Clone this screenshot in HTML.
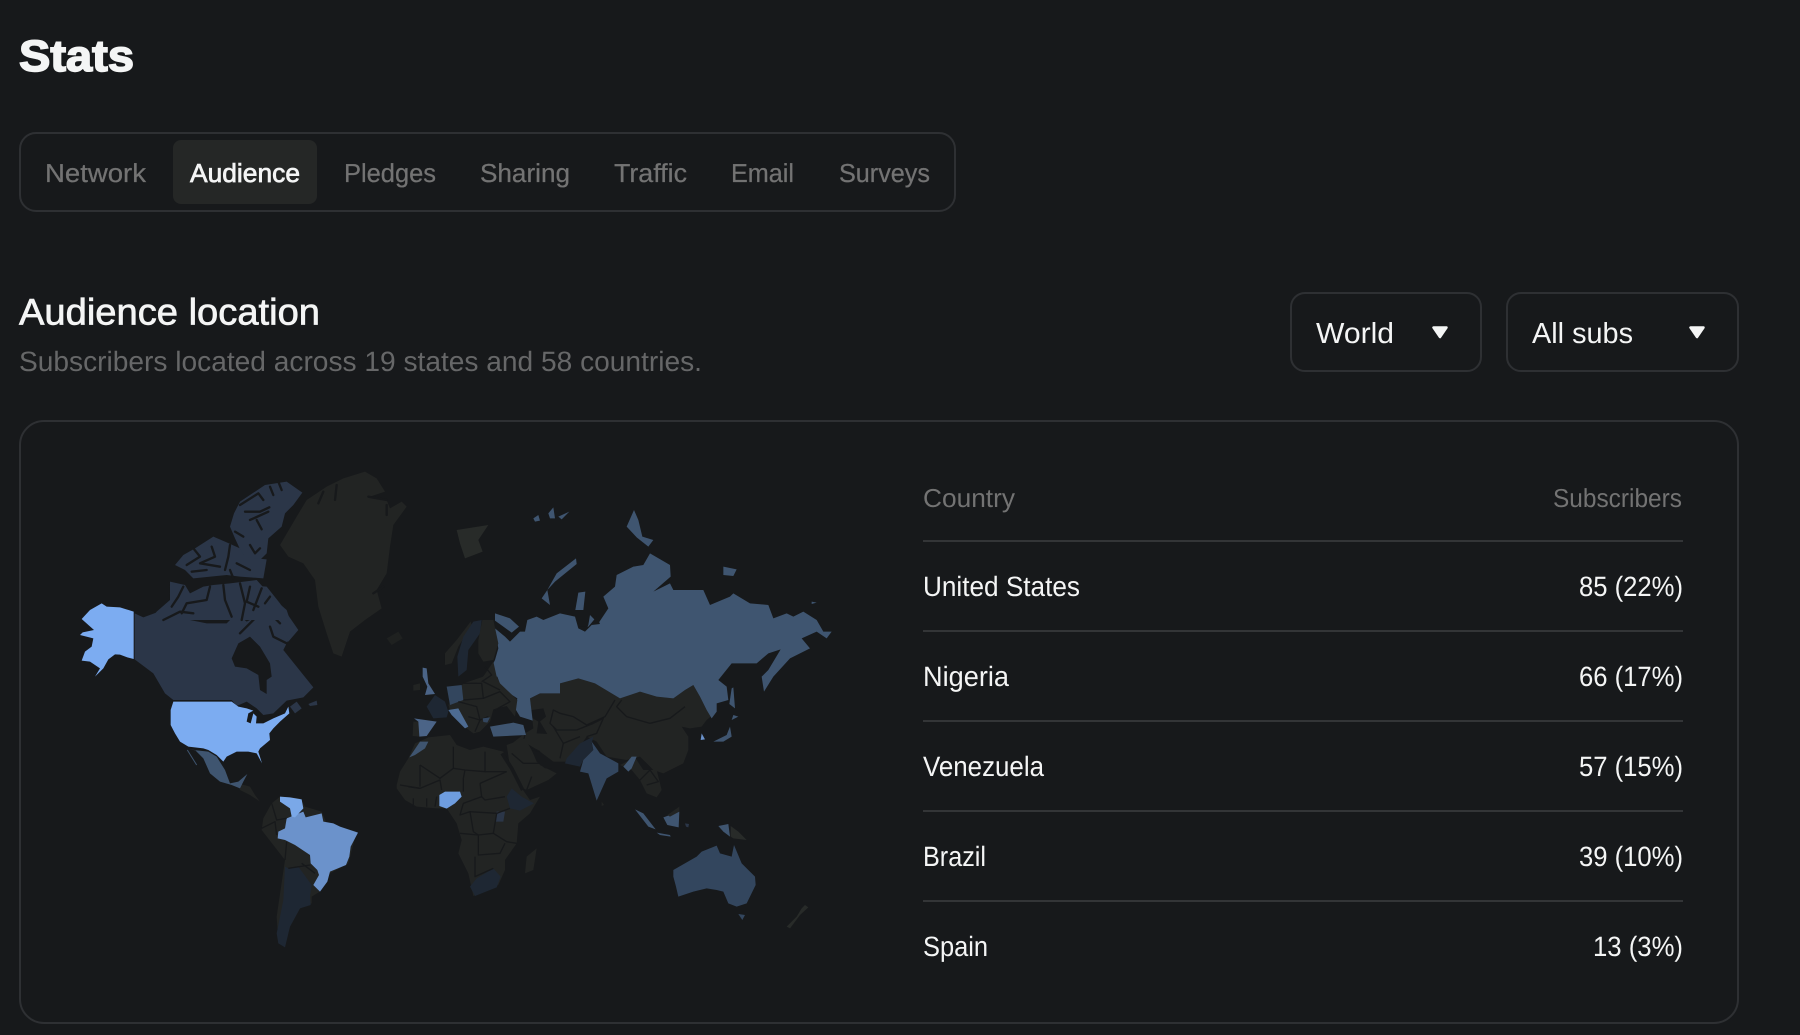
<!DOCTYPE html>
<html lang="en">
<head>
<meta charset="utf-8">
<title>Stats</title>
<style>
html,body{margin:0;padding:0;background:#17191b;width:1800px;height:1035px;overflow:hidden}
svg{display:block;position:absolute;left:0;top:0}
text{font-family:"Liberation Sans",sans-serif}
.g{fill:#737373}
.w{fill:#f4f5f5}
.n{fill:#222423}
.bl{fill:none;stroke:#17191b;stroke-width:4;stroke-linejoin:round}
.ch{fill:none;stroke:#17191b;stroke-width:7;stroke-linejoin:round;stroke-linecap:round}
</style>
</head>
<body>
<svg width="1800" height="1035" viewBox="0 0 1800 1035" xmlns="http://www.w3.org/2000/svg" text-rendering="geometricPrecision">
<rect width="1800" height="1035" fill="#17191b"/>

<text x="19" y="71" font-size="44" font-weight="700" fill="#f4f5f5" stroke="#f4f5f5" stroke-width="1.6" textLength="115" lengthAdjust="spacingAndGlyphs">Stats</text>

<rect x="20" y="133" width="935" height="78" rx="16" fill="none" stroke="#2e3033" stroke-width="2"/>
<rect x="173" y="140" width="144" height="64" rx="8" fill="#252726"/>
<g font-size="26" class="g" stroke="#737373" stroke-width=".25">
<text x="45" y="182" textLength="101" lengthAdjust="spacingAndGlyphs">Network</text>
<text x="344" y="182" textLength="92" lengthAdjust="spacingAndGlyphs">Pledges</text>
<text x="480" y="182" textLength="90" lengthAdjust="spacingAndGlyphs">Sharing</text>
<text x="614" y="182" textLength="73" lengthAdjust="spacingAndGlyphs">Traffic</text>
<text x="731" y="182" textLength="63" lengthAdjust="spacingAndGlyphs">Email</text>
<text x="839" y="182" textLength="91" lengthAdjust="spacingAndGlyphs">Surveys</text>
</g>
<text x="190" y="182" font-size="26" class="w" stroke="#f4f5f5" stroke-width=".7" textLength="110" lengthAdjust="spacingAndGlyphs">Audience</text>

<text x="19" y="324.5" font-size="37" class="w" stroke="#f4f5f5" stroke-width=".7" textLength="301" lengthAdjust="spacingAndGlyphs">Audience location</text>
<text x="19" y="371" font-size="28" fill="#666768" textLength="683" lengthAdjust="spacingAndGlyphs">Subscribers located across 19 states and 58 countries.</text>

<rect x="1291" y="293" width="190" height="78" rx="14" fill="none" stroke="#2e3033" stroke-width="2"/>
<rect x="1507" y="293" width="231" height="78" rx="14" fill="none" stroke="#2e3033" stroke-width="2"/>
<text x="1316" y="343" font-size="29" class="w" textLength="78" lengthAdjust="spacingAndGlyphs">World</text>
<text x="1532" y="343" font-size="29" class="w" textLength="101" lengthAdjust="spacingAndGlyphs">All subs</text>
<path d="M1433.5 327.5h13l-6.5 9.5z" fill="#f4f5f5" stroke="#f4f5f5" stroke-width="2.5" stroke-linejoin="round"/>
<path d="M1690.5 327.5h13l-6.5 9.5z" fill="#f4f5f5" stroke="#f4f5f5" stroke-width="2.5" stroke-linejoin="round"/>

<rect x="20" y="421" width="1718" height="602" rx="24" fill="none" stroke="#2e3033" stroke-width="2"/>

<!-- Table -->
<text x="923" y="507" font-size="26" class="g" textLength="92" lengthAdjust="spacingAndGlyphs">Country</text>
<text x="1553" y="507" font-size="26" class="g" textLength="129" lengthAdjust="spacingAndGlyphs">Subscribers</text>
<g fill="#333537">
<rect x="923" y="540" width="760" height="2"/>
<rect x="923" y="630" width="760" height="2"/>
<rect x="923" y="720" width="760" height="2"/>
<rect x="923" y="810" width="760" height="2"/>
<rect x="923" y="900" width="760" height="2"/>
</g>
<g font-size="28" class="w">
<text x="923" y="596" textLength="157" lengthAdjust="spacingAndGlyphs">United States</text>
<text x="923" y="686" textLength="86" lengthAdjust="spacingAndGlyphs">Nigeria</text>
<text x="923" y="776" textLength="121" lengthAdjust="spacingAndGlyphs">Venezuela</text>
<text x="923" y="866" textLength="63" lengthAdjust="spacingAndGlyphs">Brazil</text>
<text x="923" y="956" textLength="65" lengthAdjust="spacingAndGlyphs">Spain</text>
<text x="1579" y="596" textLength="104" lengthAdjust="spacingAndGlyphs">85 (22%)</text>
<text x="1579" y="686" textLength="104" lengthAdjust="spacingAndGlyphs">66 (17%)</text>
<text x="1579" y="776" textLength="104" lengthAdjust="spacingAndGlyphs">57 (15%)</text>
<text x="1579" y="866" textLength="104" lengthAdjust="spacingAndGlyphs">39 (10%)</text>
<text x="1593" y="956" textLength="90" lengthAdjust="spacingAndGlyphs">13 (3%)</text>
</g>

<!-- North America + Greenland -->
<g transform="translate(40,450) scale(.33333)">
<polygon class="n" points="975,65 1010,85 1035,125 990,140 1040,150 1050,175 1085,155 1100,170 1060,225 1050,290 1040,370 1010,420 1025,475 975,510 930,545 905,620 880,610 860,550 835,470 825,390 790,340 745,320 720,285 770,200 800,150 860,110 910,85"/>
<g class="ch"><polyline points="890,105 885,150"/><polyline points="850,125 835,160"/><polyline points="985,140 1040,150"/><polyline points="1000,430 1030,410"/><polyline points="1040,165 1040,195"/></g>
<polygon fill="#1f2120" points="1040,565 1075,545 1088,565 1055,585"/>
<g fill="#2b3648">
<polygon points="615,405 680,410 720,460 775,540 745,575 700,545 690,480 640,470 625,450"/>
<polygon points="284,490 310,502 370,480 430,495 450,510 500,520 560,520 590,490 620,515 650,500 680,480 720,520 745,570 730,600 770,650 820,712 790,742 740,752 700,790 670,795 650,775 620,755 590,768 575,750 400,750 375,730 340,670 284,628"/>
<polygon points="750,770 770,755 785,775 765,790"/>
<polygon points="805,762 830,752 832,765 810,768"/>
</g>
<polygon fill="#17191b" points="575,625 595,580 630,560 660,590 690,640 695,680 680,690 680,732 660,720 655,675 620,655 585,650"/>
<g class="ch" stroke-width="7"><polyline points="600,550 650,500 680,480 720,520"/><polyline points="740,580 700,560 690,530"/><polyline points="610,420 630,460 650,410 665,455"/></g>
<polygon fill="#7cacf1" points="185,460 200,470 240,472 281,485 281,627 262,622 240,614 225,613 205,628 190,655 165,680 180,655 150,635 125,632 135,605 155,590 160,565 120,555 128,547 162,540 125,507 150,480"/>
<polygon fill="#7cacf1" points="400,755 575,755 595,770 620,775 640,782 625,790 620,815 632,820 640,790 650,800 648,820 670,820 700,805 735,790 745,770 748,790 720,815 700,835 688,850 690,870 660,895 655,905 666,940 650,910 625,905 590,905 560,920 550,935 530,915 505,900 490,895 445,890 420,875 405,850 392,825 392,780"/>
</g>

<!-- Canadian arctic -->
<g transform="translate(150,470) scale(.33333)">
<g fill="#2b3648">
<polygon points="270,95 345,45 410,35 457,68 430,105 405,130 395,170 355,205 350,250 325,275 285,270 255,205 240,170 252,130"/>
<polygon points="75,285 100,255 135,235 190,200 225,215 270,235 285,262 350,268 340,325 270,320 230,315 130,325 105,300"/>
<polygon points="60,335 105,345 120,370 160,350 190,345 240,340 320,330 370,385 410,420 420,450 0,450 20,425 60,390"/>
</g>
<g class="ch">
<polyline points="285,125 330,125 358,112"/><polyline points="300,150 355,125"/><polyline points="320,150 335,178"/><polyline points="255,185 280,200"/><polyline points="300,225 315,250 330,235"/><polyline points="270,105 325,70 340,90"/><polyline points="360,50 370,75"/><polyline points="385,35 395,60"/>
<polyline points="130,235 150,260 110,285"/><polyline points="185,230 195,260 150,280 210,290"/><polyline points="240,225 235,260 225,300"/><polyline points="260,280 300,300"/><polyline points="125,305 170,300"/><polyline points="240,300 250,325"/>
<polyline points="100,350 85,380 65,410"/><polyline points="180,350 170,390 110,400 95,430"/><polyline points="220,345 225,390 245,440"/><polyline points="270,340 285,400 275,450"/><polyline points="300,350 290,395 325,410"/><polyline points="335,355 310,420"/><polyline points="360,380 345,400"/>
<polyline points="40,450 90,425 130,430"/>
</g>
</g>

<!-- Eurasia -->
<g transform="translate(440,450) scale(.33333)">
<polygon class="n" points="270,745 300,730 360,730 360,700 415,685 465,700 540,745 600,725 650,740 700,745 735,720 760,705 780,740 800,780 830,760 830,785 800,810 785,830 750,835 725,830 745,860 745,900 730,940 670,970 640,960 600,920 560,930 500,920 470,875 440,860 410,905 380,935 340,935 300,905 260,880 210,885 255,850 280,835"/>
<polygon fill="#17191b" points="275,780 310,775 318,800 300,815 322,852 290,850 295,815 270,800"/>
<polygon fill="#3f5570" points="155,650 165,630 175,595 165,535 195,560 210,575 240,545 255,545 262,510 290,500 310,510 360,490 405,500 415,535 435,545 445,525 450,495 475,520 505,475 490,440 525,410 530,375 580,350 610,345 630,310 690,345 692,380 640,425 690,400 700,420 750,420 790,420 810,465 870,440 880,430 930,460 985,465 1000,505 1040,490 1060,500 1090,485 1130,510 1150,545 1175,545 1160,565 1130,545 1085,565 1110,595 1050,625 1000,680 972,725 965,680 985,660 1022,598 985,610 950,640 875,640 835,690 860,710 865,750 830,760 830,785 815,805 800,780 780,740 760,705 735,720 700,745 650,740 600,725 540,745 465,700 415,685 360,700 360,730 300,730 270,745 278,812 240,800 225,775 232,745 185,715 172,680 155,680"/>
<g fill="#3f5570">
<polygon points="165,490 210,505 237,530 215,548 190,530 165,512"/>
<polygon points="408,325 350,370 322,420 305,445 330,465 322,420 345,395 410,342"/>
<polygon points="415,428 436,425 430,480 406,480"/>
<polygon points="582,180 595,210 607,260 640,270 625,290 590,262 560,230"/>
<polygon points="850,350 890,358 880,378 850,375"/>
<polygon points="1115,455 1130,458 1115,462"/>
<polygon points="280,205 295,195 300,212 285,215"/>
<polygon points="325,190 340,172 345,205 330,205"/>
<polygon points="355,200 388,185 365,208"/>
<polygon points="880,712 885,775 868,762 875,715"/>
</g>
<polygon fill="#282b29" points="50,240 145,225 115,270 128,305 75,325 60,280"/>
<polygon fill="#17191b" points="415,530 445,530 470,500 480,522 455,525 435,545"/>
<g class="bl">
<polyline points="525,750 495,800 440,825 400,800 360,790 340,780 330,820 350,840 410,840"/>
<polyline points="545,750 530,770 560,800 630,820 690,805 735,770"/>
<polyline points="410,840 460,820 490,805 470,850 440,860"/>
<polyline points="340,830 370,880 360,925"/>
<polyline points="255,850 250,880 300,905"/>
<polyline points="370,880 420,860"/>
</g>
</g>

<!-- Europe -->
<g transform="translate(400,620) scale(.33333)">
<polygon class="n" points="145,255 190,190 240,180 275,140 300,190 352,240 345,290 320,258 280,268 270,305 240,335 220,340 200,325 175,265 150,270"/>
<polygon class="n" points="212,5 170,60 135,100 135,135 155,130 175,80 215,15"/>
<polygon fill="#1e2733" points="245,0 240,40 205,90 200,150 175,170 172,110 190,50 220,5"/>
<polygon class="n" points="247,0 280,0 295,70 280,120 250,125 235,100 235,60"/>
<polygon fill="#222423" points="190,190 250,170 280,125 290,170 240,185"/>
<polygon fill="#4b6487" points="68,143 80,145 85,190 105,222 75,225 82,200 68,170"/>
<polygon class="n" points="40,195 60,190 60,210 40,212"/>
<polygon fill="#1e2733" points="105,225 135,245 145,275 140,292 100,295 80,260"/>
<polygon fill="#33465e" points="140,200 185,195 190,240 150,255"/>
<polygon class="n" points="40,305 55,305 58,350 38,348"/>
<polygon fill="#4b6487" points="42,295 110,305 80,348 58,350 55,305"/>
<polygon fill="#4d6b92" points="145,270 175,265 205,320 195,325 155,285"/>
<g class="bl">
<polyline points="190,190 245,190 250,235 190,240"/>
<polyline points="250,185 300,210"/><polyline points="250,235 300,215 330,245 285,270"/>
<polyline points="175,245 230,260 240,300 265,290"/><polyline points="205,290 240,300 225,335"/>
<polyline points="255,140 275,165 245,185"/>
</g>
<polygon fill="#33465e" points="248,295 270,292 262,308 250,306"/>
<polygon fill="#3f5570" points="270,320 340,308 370,315 378,345 280,350"/>
</g>

<!-- Africa + South America -->
<g transform="translate(240,700) scale(.33333)">
<polygon class="n" points="470,255 480,215 505,175 525,130 565,112 630,105 650,135 690,150 730,140 790,155 835,250 870,300 900,290 870,340 835,370 830,430 795,480 795,510 775,555 700,588 685,520 655,460 665,420 650,370 620,325 590,325 530,320 495,300 470,265"/>
<polygon class="n" points="800,135 855,115 900,195 950,220 925,240 860,270 840,260 810,200"/>
<polygon fill="#3f5570" points="508,172 540,125 565,125 555,145 525,165"/>
<polygon fill="#1e2733" points="800,290 815,265 845,290 882,310 840,332 810,325"/>
<polygon fill="#1e2733" points="690,560 710,535 760,505 782,530 770,562 705,588"/>
<polygon fill="#2b3648" points="770,335 795,335 790,365 768,365"/>
<polygon fill="#6e9ddf" points="598,285 615,275 660,275 665,290 645,310 620,326 598,318"/>
<polygon class="n" points="890,445 880,510 855,520 860,470"/>
<polyline points="786,160 815,205 848,270" fill="none" stroke="#17191b" stroke-width="11"/>
<g class="bl">
<polyline points="540,195 600,235 640,205 640,140"/><polyline points="640,205 675,210 735,215 735,155"/>
<polyline points="735,215 800,215"/><polyline points="720,250 800,215"/><polyline points="720,250 725,290 735,300 795,290"/>
<polyline points="505,260 540,265 600,240 605,270"/><polyline points="540,195 540,260"/>
<polyline points="675,210 670,235 670,275"/><polyline points="670,310 725,290"/><polyline points="670,310 660,345 690,335 770,340"/>
<polyline points="690,335 700,395 715,405 760,400 770,340"/><polyline points="660,400 715,405 715,465 780,460 795,430"/>
<polyline points="705,470 705,530 760,505"/><polyline points="480,255 540,265"/><polyline points="520,295 520,320"/><polyline points="560,295 560,320"/><polyline points="590,290 585,320"/>
<polyline points="760,400 800,425 830,430"/><polyline points="770,340 810,325"/>
<polyline points="850,190 815,160"/><polyline points="850,190 905,190"/><polyline points="860,270 875,230"/>
</g>
<polygon class="n" points="120,290 180,295 195,320 245,335 260,370 350,395 325,490 270,520 240,575 215,590 215,610 180,625 150,680 135,730 115,730 110,650 135,480 65,390 70,355 95,310"/>
<polygon fill="#1e2733" points="145,505 175,500 215,555 210,590 212,615 180,625 150,680 135,742 115,730 110,700 130,600 135,500"/>
<polygon fill="#6b92cb" points="190,335 197,352 245,340 250,365 280,370 300,380 354,398 332,440 328,470 318,495 270,515 262,545 240,575 220,555 237,525 232,510 212,490 210,465 165,435 135,420 113,415 115,395 135,385 140,355"/>
<polygon fill="#7aa8e8" points="120,290 150,292 185,298 190,325 165,352 155,350 150,325 120,305"/>
<g class="bl"><polyline points="95,310 110,360 140,355"/><polyline points="65,385 105,365 110,405"/><polyline points="135,480 140,425"/><polyline points="145,505 210,495"/><polyline points="185,490 225,520"/></g>
</g>

<!-- Mexico and Central America -->
<g transform="translate(170,730) scale(.33333)">
<polygon class="n" points="205,160 240,170 255,195 270,215 240,195 210,180"/>
<polygon fill="#3f5570" points="55,58 70,60 115,65 140,80 165,120 180,160 205,155 232,132 220,155 210,175 185,165 150,155 120,130 100,85 75,60"/>
<polyline points="52,60 80,105" fill="none" stroke="#3f5570" stroke-width="3"/>
</g>

<!-- Middle East gulf, Morocco detail -->
<g transform="translate(420,640) scale(.33333)">
<polygon fill="#17191b" points="335,330 350,335 395,385 375,385 350,365"/>
</g>

<!-- South Asia and Oceania -->
<g transform="translate(560,700) scale(.33333)">
<polygon fill="#1e2733" points="20,175 60,130 100,110 95,130 100,150 70,180 60,200 15,190"/>
<polygon fill="#33465e" points="95,125 120,160 175,190 175,215 140,235 110,302 85,220 60,215 70,180 100,150"/>
<polygon class="n" points="180,195 225,172 250,210 290,210 305,270 290,292 260,280 240,240 215,210"/>
<polygon fill="#3f5570" points="190,200 215,170 230,170 215,205 205,215"/>
<polygon fill="#3f5570" points="225,328 250,340 287,388 265,380"/>
<polygon fill="#3f5570" points="290,398 330,405 332,410 300,405"/>
<polygon fill="#3f5570" points="310,352 358,335 356,382 322,375"/>
<polygon fill="#222423" points="322,345 358,320 358,335 330,350"/>
<polygon fill="#2b3648" points="375,370 387,372 385,382 378,380"/>
<polygon fill="#3f5570" points="475,378 505,372 510,410 490,395"/>
<polygon fill="#282b29" points="512,378 535,395 560,420 520,415 512,410"/>
<polygon fill="#33465e" points="340,510 410,470 425,455 470,437 480,460 515,470 522,435 545,490 585,530 587,555 560,610 530,620 505,610 490,575 470,570 440,565 400,575 355,590 348,560 340,530"/>
<polygon fill="#33465e" points="535,642 555,645 547,660"/>
<polygon fill="#282b29" points="735,615 745,622 720,645 690,685 680,680 710,650 725,625"/>
<polygon fill="#3f5570" points="510,80 515,110 490,125 460,125 500,105"/>
<polygon fill="#6b92cb" points="425,100 435,118 422,120"/>
<polygon fill="#3f5570" points="520,45 535,50 515,60"/>
<polygon fill="#222423" points="125,305 132,315 125,318"/>
<g class="bl"><polyline points="240,240 270,210 295,245 260,255"/></g>
</g>
</svg>
</body>
</html>
